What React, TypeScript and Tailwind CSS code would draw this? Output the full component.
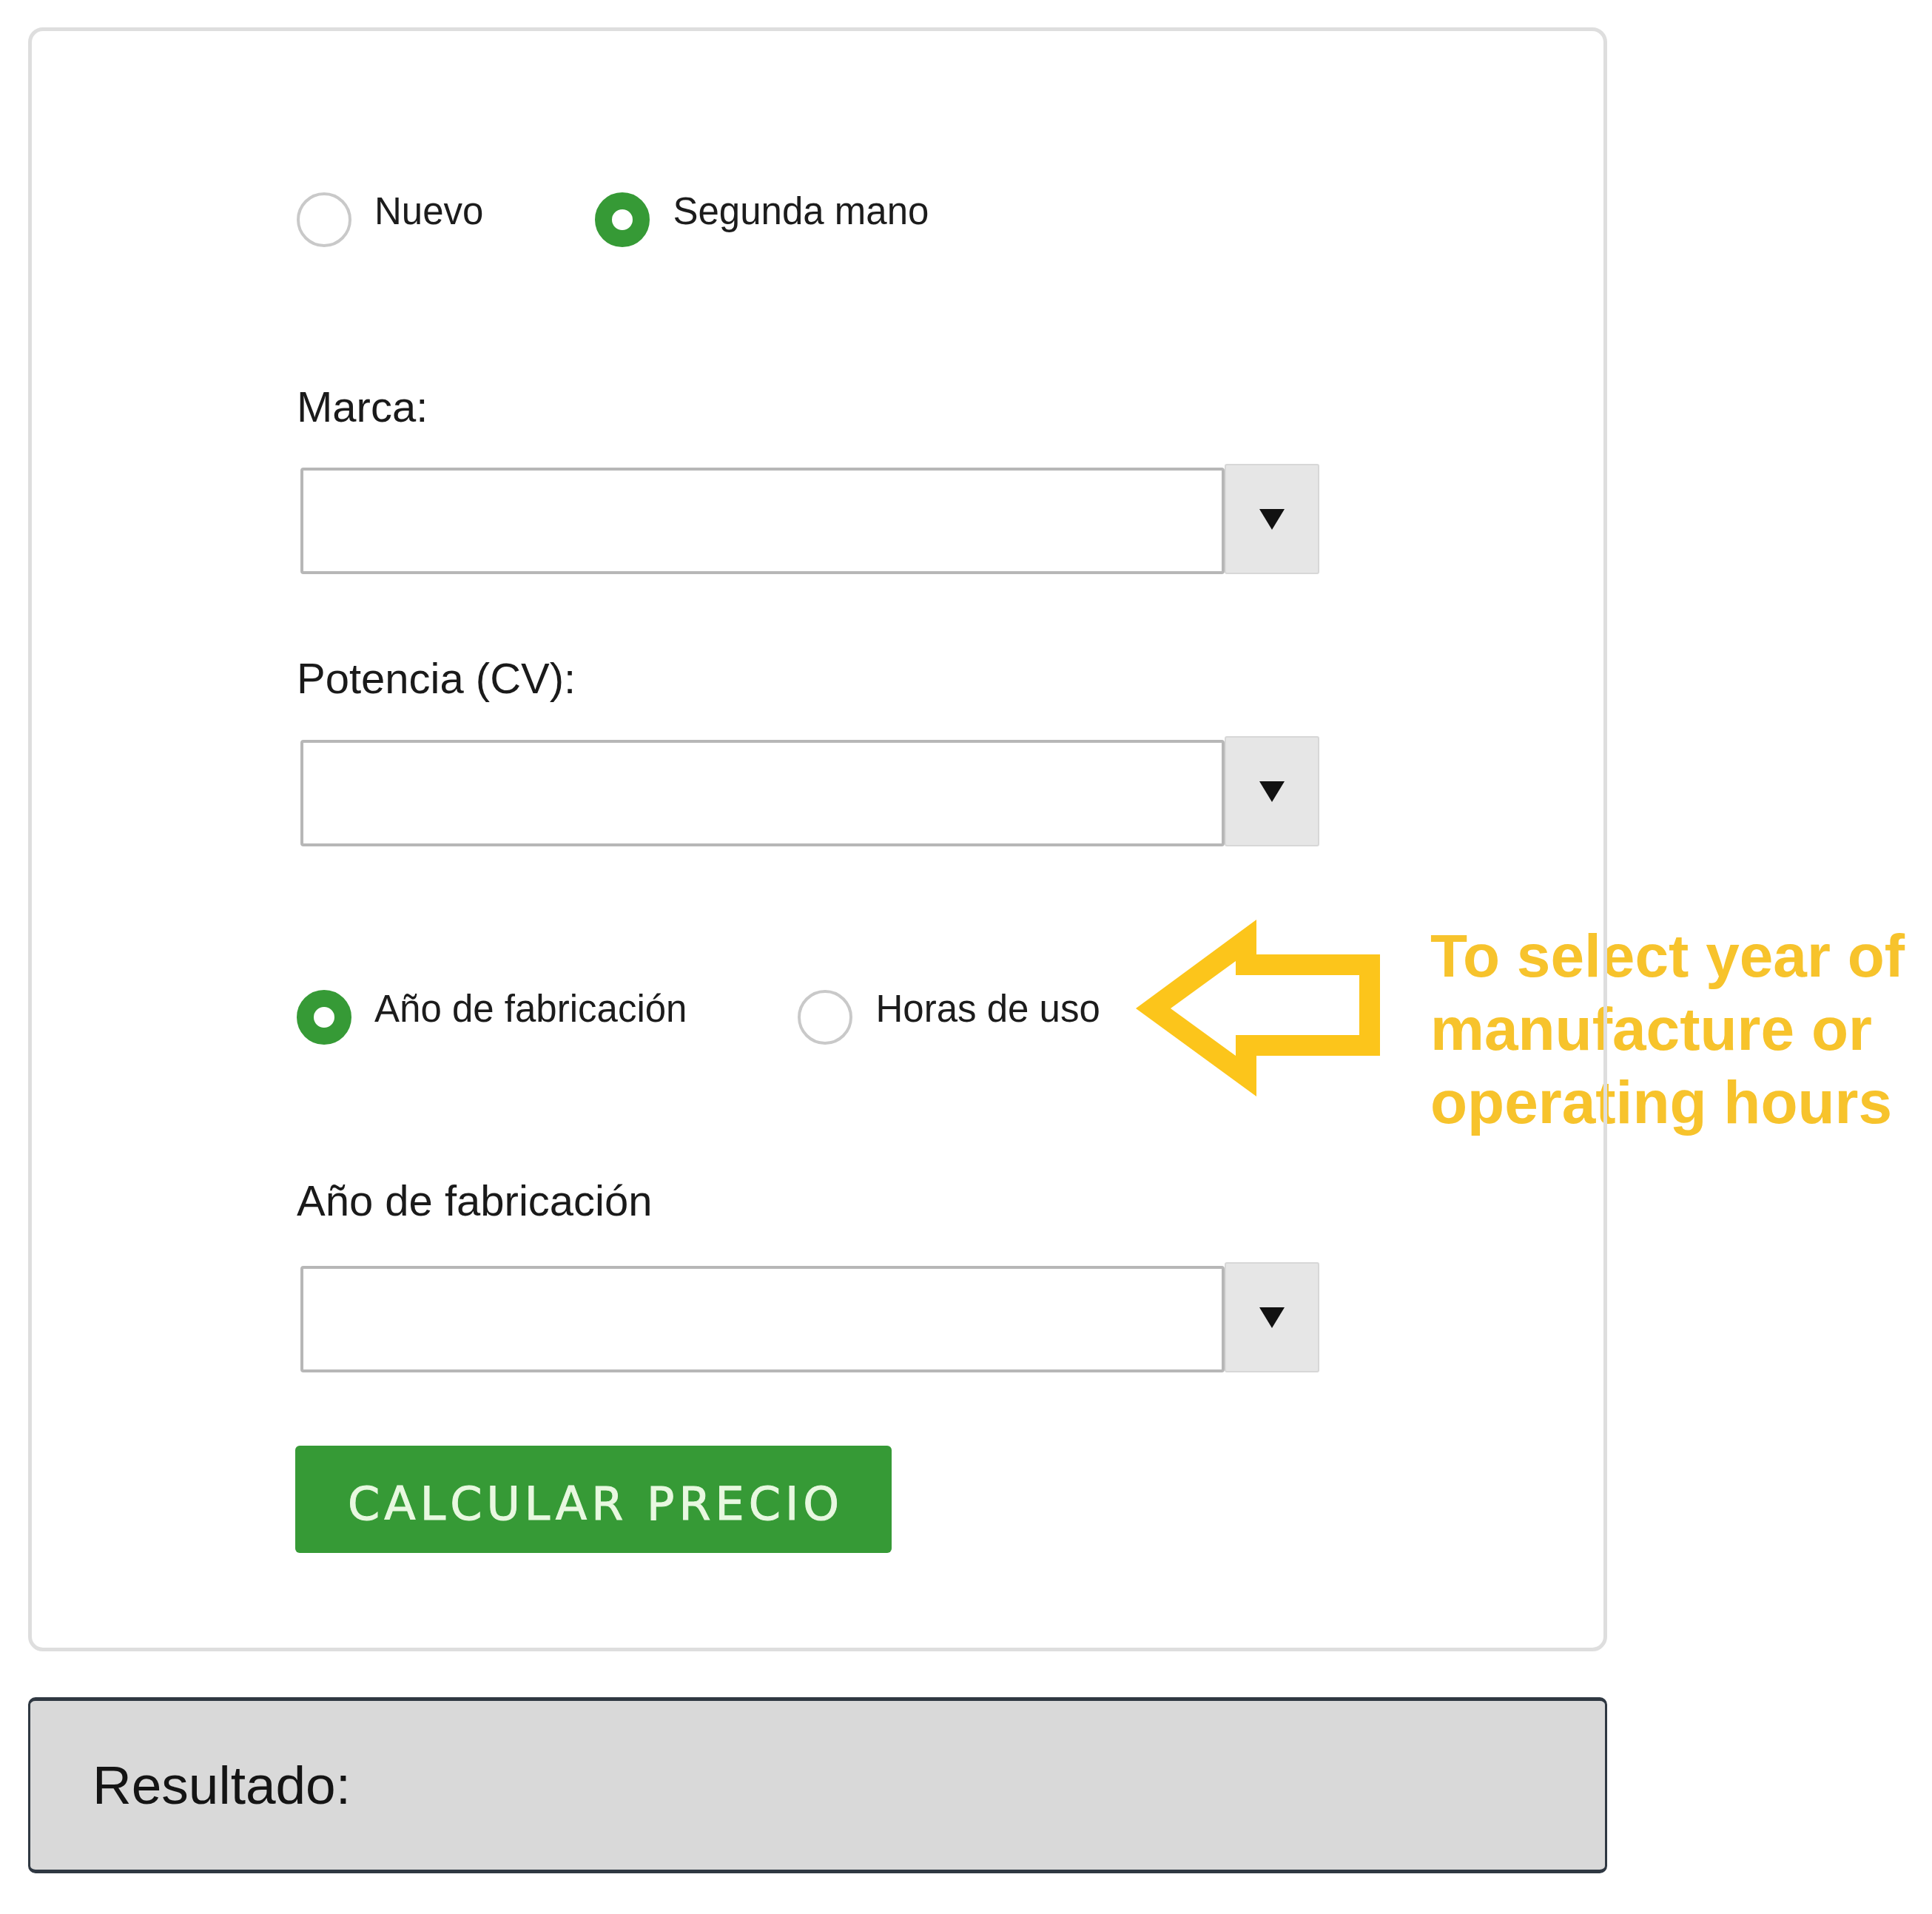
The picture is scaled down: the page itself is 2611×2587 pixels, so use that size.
import React from 'react';

// Price calculator form (tractor) with an annotation arrow

function Radio({ label, checked }: { label: string; checked?: boolean }) {
  return (
    <label className="flex items-start gap-[31px]">
      <span
        className={
          checked
            ? 'block h-[74px] w-[74px] shrink-0 rounded-full border-[23px] border-[#369a36] bg-white'
            : 'block h-[74px] w-[74px] shrink-0 rounded-full border-[4px] border-[#c9c9c9] bg-white'
        }
      />
      <span className="text-[51px] leading-[51px] text-[#1c1c1c]">{label}</span>
    </label>
  );
}

function FakeSelect({ className = '' }: { className?: string }) {
  return (
    <div className={`ml-[5px] flex items-start ${className}`}>
      <div className="mt-[5px] h-[144px] w-[1249px] rounded-[4px] border-[4px] border-[#b7b7b7] bg-white" />
      <div className="flex h-[149px] w-[128px] items-center justify-center rounded-[3px] border-[2px] border-[#d7d7d7] bg-[#e6e6e6]">
        <svg width="34" height="28" viewBox="0 0 34 28">
          <path d="M0 0h34L17 28z" fill="#111" />
        </svg>
      </div>
    </div>
  );
}

function FieldLabel({ children, className = '' }: { children: React.ReactNode; className?: string }) {
  return <div className={`text-[58px] leading-[67px] text-[#1a1a1a] ${className}`}>{children}</div>;
}

export default function App() {
  return (
    <div className="relative min-h-[2587px] w-[2611px] bg-white font-['Liberation_Sans',Arial,sans-serif]">
      {/* annotation, sits under the card border */}
      <svg
        className="absolute left-[1520px] top-[1230px] z-0"
        width="360"
        height="270"
        viewBox="1520 1230 360 270"
      >
        <path
          fillRule="evenodd"
          fill="#fcc51b"
          d="M1535 1363 L1698 1243 L1698 1290 L1865 1290 L1865 1427 L1698 1427 L1698 1482 Z M1582 1363 L1670 1427 L1670 1399 L1837 1399 L1837 1318 L1670 1318 L1670 1299 Z"
        />
      </svg>
      <div className="absolute left-[1933px] top-[1242px] z-0 whitespace-nowrap text-[82px] font-bold leading-[99px] text-[#f7c32c]">
        <div>To select year of</div>
        <div>manufacture or</div>
        <div>operating hours</div>
      </div>

      <div className="relative z-10 pl-[38px] pt-[37px]">
        {/* form card */}
        <div className="w-[2134px] rounded-[20px] border-[5px] border-[#dedede] pb-[128px] pl-[358px] pt-[218px]">
          <div className="flex gap-[151px]">
            <Radio label="Nuevo" />
            <Radio label="Segunda mano" checked />
          </div>

          <FieldLabel className="mt-[182px]">Marca:</FieldLabel>
          <FakeSelect className="mt-[44px]" />

          <FieldLabel className="mt-[107px]">Potencia (CV):</FieldLabel>
          <FakeSelect className="mt-[45px]" />

          <div className="mt-[194px] flex gap-[150px]">
            <Radio label="Año de fabricación" checked />
            <Radio label="Horas de uso" />
          </div>

          <FieldLabel className="mt-[177px]">Año de fabricación</FieldLabel>
          <FakeSelect className="mt-[50px]" />

          <button className="ml-[-2px] mt-[99px] flex h-[145px] w-[806px] items-center justify-center rounded-[6px] bg-[#369a36] pl-[6px] pt-[12px] font-['DejaVu_Sans',Verdana,sans-serif] text-[62px] tracking-[6px] text-[#e8f8e0] [-webkit-text-stroke:1px_#e8f8e0]">
            CALCULAR PRECIO
          </button>
        </div>

        {/* result */}
        <div className="mt-[62px] flex h-[238px] w-[2134px] items-center rounded-[10px] border-x-[3px] border-y-[5px] border-[#2f3842] bg-[#d9d9d9] pl-[84px]">
          <span className="text-[73px] leading-[84px] text-[#141414]">Resultado:</span>
        </div>
      </div>
    </div>
  );
}
